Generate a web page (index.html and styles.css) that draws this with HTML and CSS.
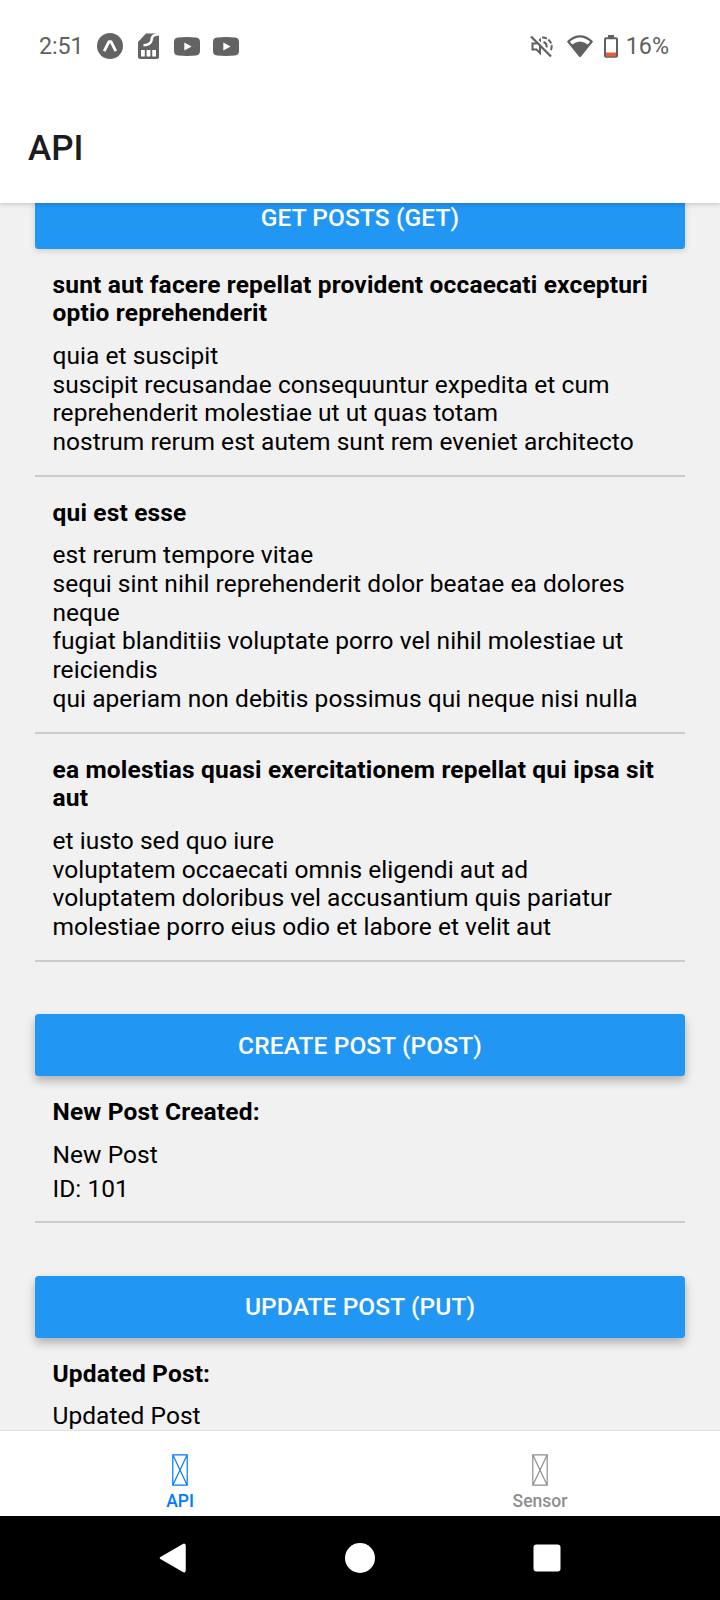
FILE: index.html
```html
<!DOCTYPE html>
<html lang="en">
<head>
<meta charset="utf-8">
<title>API</title>
<link rel="stylesheet" href="styles.css">
</head>
<body>
<div class="screen">
  <div class="status-bar">
    <span class="clock">2:51</span>
    <div class="notifications">
      <svg width="26" height="26" viewBox="0 0 26 26"><circle cx="13" cy="13" r="13" fill="#636363"/><path d="M7.200 18.200 L12 8.600 H14 L18.800 18.200" fill="none" stroke="#fff" stroke-width="2.800" stroke-linejoin="round"/></svg>
      <svg class="sim" width="21" height="26" viewBox="0 0 21 26"><path d="M8 .5 H21 V23.500 Q21 26 18.500 26 H2.500 Q0 26 0 23.500 V9 Z" fill="#636363"/><path d="M21 1.200 C13.500 1.500 14 5 13.300 8 C12.500 11 10.500 12 5.500 12.200" fill="none" stroke="#fff" stroke-width="2.600"/><path d="M3 17h3.800v6.500H3zM8.600 17h3.800v6.500H8.600zM14.200 17H18v6.500h-3.800z" fill="#fff"/></svg>
      <svg class="video" width="26" height="19" viewBox="0 0 26 19"><path d="M4 .5 Q13 -.3 22 .5 Q26 .8 26 5 V14 Q26 18.200 22 18.500 Q13 19.300 4 18.500 Q0 18.200 0 14 V5 Q0 .8 4 .5Z" fill="#636363"/><path d="M10.300 5.400 L17.600 9.500 L10.300 13.600Z" fill="#fff"/></svg>
      <svg class="video" width="26" height="19" viewBox="0 0 26 19"><path d="M4 .5 Q13 -.3 22 .5 Q26 .8 26 5 V14 Q26 18.200 22 18.500 Q13 19.300 4 18.500 Q0 18.200 0 14 V5 Q0 .8 4 .5Z" fill="#636363"/><path d="M10.300 5.400 L17.600 9.500 L10.300 13.600Z" fill="#fff"/></svg>
    </div>
    <div class="indicators">
      <svg width="23" height="23" viewBox="0 0 23 23" fill="none" stroke="#606060" stroke-width="2"><path d="M2.500 8.500 H6 L10 5 V18 L6.500 14.500 H2.500Z"/><path d="M12 2.600 A9 9 0 0 1 20.500 16" stroke-dasharray="5 1.600"/><path d="M13.500 7 A5 5 0 0 1 16.500 12.500"/><path d="M2.500 .5 L22.500 20.500" stroke="#fff" stroke-width="2"/><path d="M1 1.500 L21 21.500" stroke-width="2.300"/></svg>
      <svg class="wifi" width="26" height="23" viewBox="0 0 26 23"><path d="M1.300 6.500 Q13 -3.800 24.700 6.500 L13 21 Z" fill="#fff" stroke="#606060" stroke-width="2.200" stroke-linejoin="round"/><path d="M4.500 10 Q13 3 21.500 10 L13 21Z" fill="#606060"/></svg>
      <svg class="battery" width="14" height="23" viewBox="0 0 14 23"><path d="M4 0h6v3H4z" fill="#606060"/><rect x="1" y="3.200" width="12" height="18.600" rx="1" fill="#fff" stroke="#606060" stroke-width="2"/><path d="M2 17.500h10v4H2z" fill="#e2603a"/></svg>
      <span class="percent">16%</span>
    </div>
  </div>
  <header class="header"><h1 class="title">API</h1></header>
  <main class="content">
    <div class="scroll">
      <button class="button flat">GET POSTS (GET)</button>
      <article class="item">
        <h2 class="item-title">sunt aut facere repellat provident occaecati excepturi<br>optio reprehenderit</h2>
        <p class="text">quia et suscipit<br>suscipit recusandae consequuntur expedita et cum<br>reprehenderit molestiae ut ut quas totam<br>nostrum rerum est autem sunt rem eveniet architecto</p>
      </article>
      <article class="item">
        <h2 class="item-title">qui est esse</h2>
        <p class="text">est rerum tempore vitae<br>sequi sint nihil reprehenderit dolor beatae ea dolores<br>neque<br>fugiat blanditiis voluptate porro vel nihil molestiae ut<br>reiciendis<br>qui aperiam non debitis possimus qui neque nisi nulla</p>
      </article>
      <article class="item">
        <h2 class="item-title">ea molestias quasi exercitationem repellat qui ipsa sit<br>aut</h2>
        <p class="text">et iusto sed quo iure<br>voluptatem occaecati omnis eligendi aut ad<br>voluptatem doloribus vel accusantium quis pariatur<br>molestiae porro eius odio et labore et velit aut</p>
      </article>
      <button class="button spaced">CREATE POST (POST)</button>
      <article class="item">
        <h2 class="item-title">New Post Created:</h2>
        <p class="text">New Post</p>
        <p class="text detail">ID: 101</p>
      </article>
      <button class="button spaced">UPDATE POST (PUT)</button>
      <article class="item">
        <h2 class="item-title">Updated Post:</h2>
        <p class="text">Updated Post</p>
      </article>
    </div>
  </main>
  <nav class="tabs">
    <a class="tab active"><svg width="16" height="32" viewBox="0 0 16 32"><path d="M.8 .8H15.200V31.200H.8ZL15.200 31.200M15.200 .8L.8 31.200" fill="none" stroke="currentColor" stroke-width="1.200"/></svg><span>API</span></a>
    <a class="tab"><svg width="16" height="32" viewBox="0 0 16 32"><path d="M.8 .8H15.200V31.200H.8ZL15.200 31.200M15.200 .8L.8 31.200" fill="none" stroke="currentColor" stroke-width="1.200"/></svg><span>Sensor</span></a>
  </nav>
  <div class="system-nav">
    <svg width="28" height="30" viewBox="0 0 28 30"><path d="M2 15 L24.500 2 Q25.500 1.500 25.500 3 V27 Q25.500 28.500 24.500 28Z" fill="#fff" stroke="#fff" stroke-width="2.500" stroke-linejoin="round"/></svg>
    <svg width="30" height="30" viewBox="0 0 30 30"><circle cx="15" cy="15" r="15" fill="#fff"/></svg>
    <svg width="28" height="28" viewBox="0 0 28 28"><rect x=".5" y=".5" width="27" height="27" rx="3" fill="#fff"/></svg>
  </div>
</div>
</body>
</html>
```

FILE: styles.css
```css
* { box-sizing: border-box; }
body { margin: 0; background: #fff; font-family: Roboto, "Liberation Sans", sans-serif; }
h1, h2, p { margin: 0; }
svg { display: block; flex: none; }
.screen { width: 720px; height: 1600px; display: flex; flex-direction: column; overflow: hidden; }

.status-bar { height: 92px; flex: none; display: flex; align-items: center; padding: 0 51px 0 39px; color: #606060; font-size: 23.300px; line-height: 28px; background: #fff; position: relative; z-index: 2; }
.clock { width: 58px; letter-spacing: -.1px; }
.notifications { display: flex; align-items: center; }
.sim { margin-left: 15px; }
.video { margin-left: 13px; }
.sim + .video { margin-left: 15px; }
.indicators { margin-left: auto; display: flex; align-items: center; }
.wifi { margin-left: 14px; }
.battery { margin-left: 11px; }
.percent { margin-left: 8px; }

.header { height: 110.500px; flex: none; background: #fff; padding: 36px 28px 0; position: relative; z-index: 1; box-shadow: 0 1px 5px rgba(0, 0, 0, .2); }
.title { font-size: 35px; line-height: 41px; font-weight: 500; color: #1c1c1e; }

.content { flex: 1; min-height: 0; overflow: hidden; background: #f1f1f1; padding: 0 35px; }
.scroll { display: flex; flex-direction: column; margin-top: -16px; }
.button { flex: none; height: 62px; border: 0; border-radius: 3.500px; background: #2196f3; color: #fff; font: 500 24.500px/28.670px Roboto, sans-serif; letter-spacing: .1px; padding: 2px 0 0; box-shadow: 0 5px 10px rgba(0, 0, 0, .27); }
.flat { box-shadow: 0 2px 6px rgba(0, 0, 0, .14); }
.spaced { margin-top: 52.400px; }
.item { flex: none; padding: 22px 17.500px 18.200px; border-bottom: 2px solid #ccc; white-space: nowrap; color: #000; }
.item-title { font-size: 24.500px; line-height: 28.670px; font-weight: 700; letter-spacing: .17px; margin-bottom: 14px; }
.text { font-size: 24.500px; line-height: 28.670px; letter-spacing: .045px; }
.detail { margin-top: 5px; }

.tabs { flex: none; height: 86px; border-top: 1px solid #dedede; display: flex; background: #fff; }
.tab { flex: 1; display: flex; flex-direction: column; align-items: center; padding-top: 23px; color: #8e8e8f; font-size: 17.500px; line-height: 21px; font-weight: 500; }
.tab span { margin-top: 5px; }
.active { color: #007aff; }

.system-nav { flex: none; height: 84px; background: #000; display: flex; align-items: center; justify-content: space-between; padding: 0 159px 0 158.500px; }
```
